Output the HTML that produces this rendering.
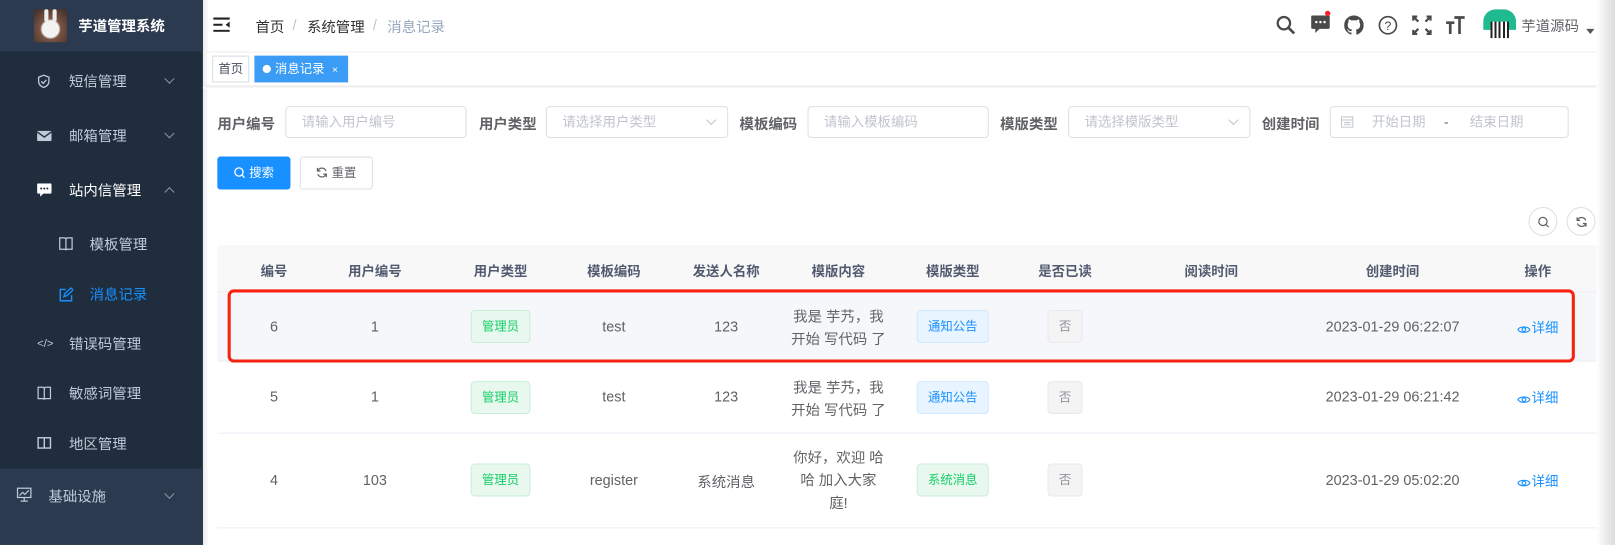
<!DOCTYPE html>
<html><head><meta charset="utf-8">
<style>
*{margin:0;padding:0;box-sizing:border-box}
body{width:1615px;height:529px;overflow:hidden;background:#fff;font-family:"Liberation Sans","Noto Sans CJK SC",sans-serif;font-size:14px;color:#606266;position:relative}
#w{position:absolute;left:0;top:0;width:1568px;height:514px;transform:scale(1.03);transform-origin:0 0}
.a{position:absolute}
#side{left:0;top:0;width:197px;height:529px;background:#1f2d3d}
#logo{left:0;top:0;width:197px;height:50px;background:#2b3a4f}
.mi{position:absolute;left:0;width:197px;color:#bfcbd9;font-size:14px;height:20px;line-height:20px}
.mi span.t{position:absolute;left:67px}
.mi.sub span.t{left:87px}
.mi svg{position:absolute;top:3px}
.arr{position:absolute;left:161px;top:4px;width:7px;height:7px;border-right:1px solid #8c96a3;border-bottom:1px solid #8c96a3;transform:rotate(45deg)}
.arr.up{transform:rotate(-135deg);top:8px}
.lbl{position:absolute;top:110px;font-weight:bold;font-size:14px;color:#606266}
.inp{position:absolute;top:103px;height:31px;border:1px solid #dcdfe6;border-radius:4px;color:#c0c4cc;font-size:13px;line-height:29px;padding-left:15px}
.sel:after{content:"";position:absolute;right:12px;top:9px;width:6px;height:6px;border-right:1px solid #c0c4cc;border-bottom:1px solid #c0c4cc;transform:rotate(45deg)}
.c{position:absolute;width:160px;text-align:center;font-size:14px;color:#606266}
.th{top:253px;font-weight:bold;color:#515a6e;font-size:13px}
.tag{display:inline-block;height:32px;line-height:30px;padding:0 10px;border-radius:4px;font-size:12px;border:1px solid}
.tg{background:#e8f8ee;border-color:#c8efd6;color:#13ce66}
.tb{background:#e8f4ff;border-color:#d1e9ff;color:#1890ff}
.ti{background:#f4f4f5;border-color:#e9e9eb;color:#909399}
.hl{position:absolute;left:211px;width:1384px;height:1px;background:#ebeef5}
.lnk{color:#1890ff;font-size:13px}
.eye{display:inline-block;vertical-align:-2px;margin-right:1px}
</style></head><body>
<div id="w">
<div id="side" class="a"></div>
<div id="logo" class="a">
 <div class="a" style="left:33px;top:9px;width:32px;height:32px;background:radial-gradient(circle at 50% 60%,#f2f2f2 0 8px,#7a5444 10px,#3a2c26 100%)"></div>
 <div class="a" style="left:43px;top:9px;width:4px;height:12px;border-radius:2px;background:#eee"></div>
 <div class="a" style="left:51px;top:9px;width:4px;height:12px;border-radius:2px;background:#eee"></div>
 <div class="a" style="left:76px;top:15px;color:#fff;font-weight:bold;font-size:14px">芋道管理系统</div>
</div>
<div class="mi" style="top:69px"><svg style="left:36px" width="13" height="14" viewBox="0 0 13 14"><path d="M6.5 1L1.5 3v4c0 3 2.5 5 5 6 2.5-1 5-3 5-6V3z" fill="none" stroke="#bfcbd9" stroke-width="1.3"/><path d="M4 7l2 2 3-3.5" fill="none" stroke="#bfcbd9" stroke-width="1.3"/></svg><span class="t">短信管理</span><i class="arr"></i></div>
<div class="mi" style="top:122px"><svg style="left:36px;top:5px" width="14" height="10"><rect width="14" height="10" rx="1" fill="#bfcbd9"/><path d="M0 1l7 5 7-5" stroke="#1f2d3d" fill="none" stroke-width="1.3"/></svg><span class="t">邮箱管理</span><i class="arr"></i></div>
<div class="mi" style="top:175px;color:#fff"><svg style="left:36px;top:3px" width="14" height="13"><path d="M1 0h12a1 1 0 011 1v8a1 1 0 01-1 1H6l-3 3v-3H1a1 1 0 01-1-1V1a1 1 0 011-1z" fill="#fff"/><circle cx="4" cy="5" r="1" fill="#1f2d3d"/><circle cx="7" cy="5" r="1" fill="#1f2d3d"/><circle cx="10" cy="5" r="1" fill="#1f2d3d"/></svg><span class="t">站内信管理</span><i class="arr up"></i></div>
<div class="mi sub" style="top:227px"><svg style="left:57px" width="14" height="13"><path d="M1 1h5l1 1 1-1h5v11H8l-1 1-1-1H1z M7 2v10" fill="none" stroke="#bfcbd9" stroke-width="1.2"/></svg><span class="t">模板管理</span></div>
<div class="mi sub" style="top:276px;color:#1890ff"><svg style="left:57px" width="14" height="14"><path d="M7 2H1.5v11h11V7.5" fill="none" stroke="#1890ff" stroke-width="1.4"/><path d="M5 9l1-3 6-5.5 2 2L8 8z" fill="none" stroke="#1890ff" stroke-width="1.3"/></svg><span class="t">消息记录</span></div>
<div class="mi" style="top:324px"><span style="position:absolute;left:36px;font-size:11px">&lt;/&gt;</span><span class="t">错误码管理</span></div>
<div class="mi" style="top:372px"><svg style="left:36px" width="14" height="13"><path d="M1 1h5l1 1 1-1h5v11H8l-1 1-1-1H1z M7 2v10" fill="none" stroke="#bfcbd9" stroke-width="1.2"/></svg><span class="t">敏感词管理</span></div>
<div class="mi" style="top:421px"><svg style="left:36px" width="14" height="12"><rect x="1" y="1" width="12" height="10" fill="none" stroke="#bfcbd9" stroke-width="1.4"/><path d="M7 1v10" stroke="#bfcbd9" stroke-width="1.4"/></svg><span class="t">地区管理</span></div>
<div class="a" style="left:0;top:455px;width:197px;height:74px;background:#2b3a4f"></div>
<div class="mi" style="top:472px"><svg style="left:16px;top:1px" width="15" height="15"><rect x="1" y="1" width="13" height="9" fill="none" stroke="#bfcbd9" stroke-width="1.2"/><path d="M3 8l3-3 2 2 4-4M7.5 10v3M4 13.5h7" fill="none" stroke="#bfcbd9" stroke-width="1.2"/></svg><span class="t" style="left:47px">基础设施</span><i class="arr"></i></div>
<div class="a" style="left:197px;top:0;width:6px;height:529px;background:linear-gradient(to right,rgba(0,0,0,.08),rgba(0,0,0,0))"></div>

<svg class="a" style="left:207px;top:17px" width="17" height="14"><path d="M0 1h16M0 7h9M0 13h16" stroke="#222" stroke-width="2"/><path d="M16 4v6l-4-3z" fill="#222"/></svg>
<div class="a" style="left:248px;top:16px;color:#303133">首页</div>
<div class="a" style="left:284px;top:16px;color:#c0c4cc">/</div>
<div class="a" style="left:298px;top:16px;color:#303133">系统管理</div>
<div class="a" style="left:362px;top:16px;color:#c0c4cc">/</div>
<div class="a" style="left:376px;top:16px;color:#97a8be">消息记录</div>
<svg class="a" style="left:1239px;top:15px" width="19" height="19"><circle cx="7.5" cy="7.5" r="6" fill="none" stroke="#4a4a4a" stroke-width="2.2"/><path d="M12 12l5.5 5.5" stroke="#4a4a4a" stroke-width="2.6"/></svg>
<svg class="a" style="left:1272px;top:10px" width="20" height="26"><path d="M2 5h16a1 1 0 011 1v11a1 1 0 01-1 1H9l-4 4v-4H2a1 1 0 01-1-1V6a1 1 0 011-1z" fill="#4a4a4a"/><circle cx="6" cy="11.5" r="1.2" fill="#fff"/><circle cx="10" cy="11.5" r="1.2" fill="#fff"/><circle cx="14" cy="11.5" r="1.2" fill="#fff"/><circle cx="17" cy="3" r="2.6" fill="#f5222d"/></svg>
<svg class="a" style="left:1305px;top:15px" width="19" height="19" viewBox="0 0 16 16"><path fill="#4a4a4a" d="M8 0C3.58 0 0 3.58 0 8c0 3.540 2.29 6.53 5.470 7.59.4.07.55-.17.55-.38v-1.33c-2.230.48-2.7-1.07-2.7-1.07-.36-.92-.89-1.17-.89-1.17-.73-.5.05-.49.05-.49.8.06 1.23.83 1.23.83.71 1.22 1.87.87 2.33.66.07-.52.28-.87.5-1.07-1.78-.2-3.64-.89-3.64-3.95 0-.87.31-1.59.82-2.15-.08-.2-.36-1.02.08-2.12 0 0 .67-.21 2.2.82.64-.18 1.32-.27 2-.27.68 0 1.36.09 2 .27 1.53-1.04 2.2-.82 2.2-.82.44 1.1.16 1.92.08 2.12.51.56.82 1.27.82 2.15 0 3.07-1.87 3.75-3.65 3.95.29.25.54.73.54 1.48v2.2c0 .21.15.46.55.38A8.013 8.013 0 0016 8c0-4.42-3.58-8-8-8z"/></svg>
<svg class="a" style="left:1338px;top:15px" width="19" height="19"><circle cx="9.5" cy="9.5" r="8.3" fill="none" stroke="#4a4a4a" stroke-width="1.6"/><text x="9.5" y="14" text-anchor="middle" font-size="12" font-family="Liberation Sans" fill="#4a4a4a">?</text></svg>
<svg class="a" style="left:1371px;top:15px" width="19" height="19"><g stroke="#4a4a4a" stroke-width="2.2" fill="none"><path d="M1 5V1h4M1 1l5 5M18 5V1h-4M18 1l-5 5M1 14v4h4M1 18l5-5M18 14v4h-4M18 18l-5-5"/></g></svg>
<svg class="a" style="left:1403px;top:15px" width="20" height="19"><path d="M1 7h8M5 7v11M9 2h10M14 2v16" stroke="#4a4a4a" stroke-width="2.6" fill="none"/></svg>
<div class="a" style="left:1440px;top:9px;width:32px;height:32px;border-radius:12px 12px 4px 4px;background:#fff;overflow:hidden"><div class="a" style="left:0;top:0;width:32px;height:20px;background:#1fba8f;border-radius:12px 12px 0 0"></div><div class="a" style="left:7px;top:12px;width:18px;height:16px;background:repeating-linear-gradient(90deg,#222 0 2px,#fff 2px 4px);"></div></div>
<div class="a" style="left:1477px;top:15px;color:#606266">芋道源码</div>
<div class="a" style="left:1540px;top:28px;border:4px solid transparent;border-top:5px solid #555"></div>

<div class="a" style="left:197px;top:50px;width:1418px;height:1px;background:#eee"></div>
<div class="a" style="left:197px;top:83px;width:1418px;height:3px;background:linear-gradient(#e6e6e6,#fff)"></div>
<div class="a" style="left:206px;top:54px;width:36px;height:26px;border:1px solid #d8dce5;font-size:12px;line-height:24px;text-align:center;color:#495060">首页</div>
<div class="a" style="left:247px;top:54px;width:91px;height:26px;background:#3a9cf5;color:#fff;font-size:12px;line-height:26px;padding-left:8px"><span style="display:inline-block;width:8px;height:8px;border-radius:50%;background:#fff;margin-right:4px"></span>消息记录 <span style="font-size:10px;margin-left:4px">×</span></div>

<div class="lbl" style="left:211px">用户编号</div><div class="inp" style="left:277px;width:176px">请输入用户编号</div>
<div class="lbl" style="left:465px">用户类型</div><div class="inp sel" style="left:530px;width:177px">请选择用户类型</div>
<div class="lbl" style="left:718px">模板编码</div><div class="inp" style="left:784px;width:176px">请输入模板编码</div>
<div class="lbl" style="left:971px">模版类型</div><div class="inp sel" style="left:1037px;width:177px">请选择模版类型</div>
<div class="lbl" style="left:1225px">创建时间</div><div class="inp" style="left:1291px;width:232px;padding-left:10px"><svg class="a" style="left:10px;top:8px" width="12" height="12"><rect x="0.5" y="1.5" width="11" height="10" fill="none" stroke="#c0c4cc"/><path d="M0.5 4.5h11M3 7h6M3 9h6" stroke="#c0c4cc"/></svg><span style="position:absolute;left:40px">开始日期</span><span style="position:absolute;left:110px;color:#606266">-</span><span style="position:absolute;left:135px">结束日期</span></div>

<div class="a" style="left:211px;top:152px;width:71px;height:32px;background:#1890ff;border-radius:3px;color:#fff;font-size:12px;line-height:32px;text-align:center"><svg width="11" height="11" style="vertical-align:-1px;margin-right:4px"><circle cx="5" cy="5" r="4" fill="none" stroke="#fff" stroke-width="1.3"/><path d="M8 8l2.5 2.5" stroke="#fff" stroke-width="1.3"/></svg>搜索</div>
<div class="a" style="left:291px;top:152px;width:71px;height:32px;border:1px solid #dcdfe6;border-radius:3px;color:#606266;font-size:12px;line-height:30px;text-align:center"><svg width="11" height="11" style="vertical-align:-1px;margin-right:4px"><path d="M9.5 4A4.3 4.3 0 001.6 3.6M1.5 7a4.3 4.3 0 007.9.4" fill="none" stroke="#606266" stroke-width="1.2"/><path d="M1.2 1v3h3M9.8 10V7h-3" fill="none" stroke="#606266" stroke-width="1.2"/></svg>重置</div>
<div class="a" style="left:1484px;top:201px;width:28px;height:28px;border:1px solid #dcdfe6;border-radius:50%"><svg class="a" style="left:8px;top:8px" width="11" height="11"><circle cx="5" cy="5" r="4" fill="none" stroke="#606266" stroke-width="1.2"/><path d="M8 8l2.5 2.5" stroke="#606266" stroke-width="1.2"/></svg></div>
<div class="a" style="left:1521px;top:201px;width:28px;height:28px;border:1px solid #dcdfe6;border-radius:50%"><svg class="a" style="left:8px;top:8px" width="11" height="11"><path d="M9.5 4A4.3 4.3 0 001.6 3.6M1.5 7a4.3 4.3 0 007.9.4" fill="none" stroke="#606266" stroke-width="1.2"/><path d="M1.2 1v3h3M9.8 10V7h-3" fill="none" stroke="#606266" stroke-width="1.2"/></svg></div>

<div class="a" style="left:211px;top:238px;width:1384px;height:45px;background:#f8f8f9"></div>
<div class="a" style="left:211px;top:283px;width:1384px;height:67px;background:#f5f7fa"></div>
<div class="hl" style="top:283px"></div><div class="hl" style="top:350px"></div><div class="hl" style="top:420px"></div><div class="hl" style="top:512px"></div>

<div class="c th" style="left:186px">编号</div>
<div class="c th" style="left:284px">用户编号</div>
<div class="c th" style="left:406px">用户类型</div>
<div class="c th" style="left:516px">模板编码</div>
<div class="c th" style="left:625px">发送人名称</div>
<div class="c th" style="left:734px">模版内容</div>
<div class="c th" style="left:845px">模版类型</div>
<div class="c th" style="left:954px">是否已读</div>
<div class="c th" style="left:1096px">阅读时间</div>
<div class="c th" style="left:1272px">创建时间</div>
<div class="c th" style="left:1413px">操作</div>

<div class="c" style="left:186px;top:309px">6</div>
<div class="c" style="left:284px;top:309px">1</div>
<div class="c" style="left:406px;top:301px"><span class="tag tg">管理员</span></div>
<div class="c" style="left:516px;top:309px">test</div>
<div class="c" style="left:625px;top:309px">123</div>
<div class="c" style="left:734px;top:296px;line-height:22px">我是 芋艿，我<br>开始 写代码 了</div>
<div class="c" style="left:845px;top:301px"><span class="tag tb">通知公告</span></div>
<div class="c" style="left:954px;top:301px"><span class="tag ti">否</span></div>
<div class="c" style="left:1272px;top:309px">2023-01-29 06:22:07</div>
<div class="c lnk" style="left:1413px;top:308px"><svg class="eye" width="13" height="10"><path d="M0.7 5C2.5 1.5 10.5 1.5 12.3 5 10.5 8.5 2.5 8.5 0.7 5z" fill="none" stroke="#1890ff" stroke-width="1.1"/><circle cx="6.5" cy="5" r="1.8" fill="none" stroke="#1890ff" stroke-width="1.1"/></svg>详细</div>

<div class="c" style="left:186px;top:377px">5</div>
<div class="c" style="left:284px;top:377px">1</div>
<div class="c" style="left:406px;top:370px"><span class="tag tg">管理员</span></div>
<div class="c" style="left:516px;top:377px">test</div>
<div class="c" style="left:625px;top:377px">123</div>
<div class="c" style="left:734px;top:365px;line-height:22px">我是 芋艿，我<br>开始 写代码 了</div>
<div class="c" style="left:845px;top:370px"><span class="tag tb">通知公告</span></div>
<div class="c" style="left:954px;top:370px"><span class="tag ti">否</span></div>
<div class="c" style="left:1272px;top:377px">2023-01-29 06:21:42</div>
<div class="c lnk" style="left:1413px;top:376px"><svg class="eye" width="13" height="10"><path d="M0.7 5C2.5 1.5 10.5 1.5 12.3 5 10.5 8.5 2.5 8.5 0.7 5z" fill="none" stroke="#1890ff" stroke-width="1.1"/><circle cx="6.5" cy="5" r="1.8" fill="none" stroke="#1890ff" stroke-width="1.1"/></svg>详细</div>

<div class="c" style="left:186px;top:458px">4</div>
<div class="c" style="left:284px;top:458px">103</div>
<div class="c" style="left:406px;top:450px"><span class="tag tg">管理员</span></div>
<div class="c" style="left:516px;top:458px">register</div>
<div class="c" style="left:625px;top:458px">系统消息</div>
<div class="c" style="left:734px;top:433px;line-height:22px">你好，欢迎 哈<br>哈 加入大家<br>庭!</div>
<div class="c" style="left:845px;top:450px"><span class="tag tg">系统消息</span></div>
<div class="c" style="left:954px;top:450px"><span class="tag ti">否</span></div>
<div class="c" style="left:1272px;top:458px">2023-01-29 05:02:20</div>
<div class="c lnk" style="left:1413px;top:457px"><svg class="eye" width="13" height="10"><path d="M0.7 5C2.5 1.5 10.5 1.5 12.3 5 10.5 8.5 2.5 8.5 0.7 5z" fill="none" stroke="#1890ff" stroke-width="1.1"/><circle cx="6.5" cy="5" r="1.8" fill="none" stroke="#1890ff" stroke-width="1.1"/></svg>详细</div>

<div class="a" style="left:221px;top:281px;width:1308px;height:71px;border:3px solid #f5230f;border-radius:6px"></div>
<div class="a" style="left:1550px;top:0;width:20px;height:529px;background:linear-gradient(to right,#fff,#e8e8e8 55%,#d9d9d9)"></div>
</div>
</body></html>
